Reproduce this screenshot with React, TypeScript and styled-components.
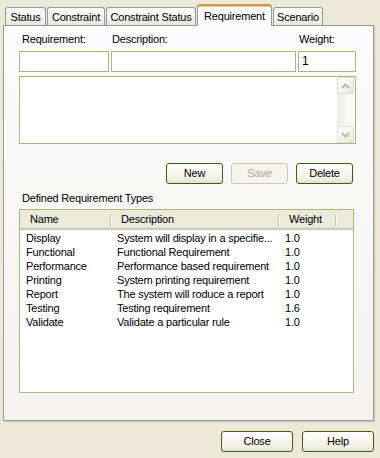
import React from "react";
import styled, { createGlobalStyle } from "styled-components";

const Global = createGlobalStyle`
  html, body { margin: 0; padding: 0; background: #ECE9D8; }
  body { font-family: "Liberation Sans", Arial, sans-serif; font-size: 11px; color: #000; letter-spacing: -0.2px; }
  * { box-sizing: border-box; }
`;

const FONT = `"Liberation Sans", Arial, sans-serif`;

const Window = styled.div`
  width: 380px;
  height: 458px;
  background: #ECE9D8;
  padding-top: 4px;
  display: flex;
  flex-direction: column;
  overflow: hidden;
`;

const TabStrip = styled.div`
  display: flex;
  align-items: flex-end;
  height: 21px;
  padding-left: 5px;
  gap: 1px;
  position: relative;
  z-index: 1;
`;

const Tab = styled.div<{ $w: number; $active?: boolean }>`
  width: ${(p) => p.$w}px;
  height: ${(p) => (p.$active ? 22 : 18)}px;
  margin-bottom: ${(p) => (p.$active ? -1 : 0)}px;
  border: 1px solid #919B9C;
  border-bottom: none;
  border-radius: 3px 3px 0 0;
  background: ${(p) =>
    p.$active ? "#FCFCFE" : "linear-gradient(180deg, #FFFFFF 0%, #F4F3EE 55%, #E9E7DC 100%)"};
  ${(p) =>
    p.$active &&
    `border-top: 2px solid #C99A4E; box-shadow: inset 0 1px 0 #EDC27A;`}
  display: flex;
  align-items: center;
  justify-content: center;
  line-height: 13px;
  white-space: nowrap;
  padding-top: ${(p) => (p.$active ? 0 : 1)}px;
`;

const Panel = styled.div`
  margin-left: 3px;
  width: 371px;
  height: 396px;
  border: 1px solid #919B9C;
  background: linear-gradient(180deg, #FCFCFE 0%, #F4F3EE 100%);
  box-shadow: 1px 1px 0 #D0CDBD, 2px 2px 0 #E3E0D0;
  padding: 7px 17px 0 15px;
  display: flex;
  flex-direction: column;
`;

const FieldRow = styled.div`
  display: grid;
  grid-template-columns: 90px 185px 58px;
  column-gap: 2px;
`;

const Field = styled.div`
  display: flex;
  flex-direction: column;
`;

const Label = styled.div<{ $pad?: number }>`
  height: 13px;
  line-height: 13px;
  padding-left: ${(p) => p.$pad ?? 3}px;
  margin-bottom: 5px;
  white-space: nowrap;
`;

const Input = styled.div`
  height: 21px;
  border: 1px solid #A4B97F;
  background: #FFFFFF;
  padding-left: 3px;
  line-height: 19px;
  font-size: 12px;
`;

const TextArea = styled.div`
  margin-top: 4px;
  height: 68px;
  border: 1px solid #A4B97F;
  background: #FFFFFF;
  display: flex;
  justify-content: flex-end;
  padding-right: 1px;
`;

const ScrollBar = styled.div`
  width: 17px;
  height: 100%;
  background: linear-gradient(90deg, #EEEDE6 0%, #F8F8F4 60%, #FBFBF9 100%);
  display: flex;
  flex-direction: column;
  justify-content: space-between;
`;

const ScrollButton = styled.div`
  width: 17px;
  height: 17px;
  border: 1px solid #DDDFD2;
  border-radius: 2px;
  background: linear-gradient(135deg, #FFFFFF 0%, #F3F2EA 60%, #E6E5DA 100%);
  display: flex;
  align-items: center;
  justify-content: center;
`;

const ButtonRow = styled.div`
  margin-top: 19px;
  display: flex;
  justify-content: flex-end;
  gap: 8px;
  padding-right: 3px;
`;

const Button = styled.button<{ $w?: number }>`
  width: ${(p) => p.$w ?? 57}px;
  height: 21px;
  border: 1px solid #3E5D12;
  border-radius: 3px;
  background: linear-gradient(180deg, #FFFFFF 0%, #FAF9F1 40%, #F1EFE3 80%, #E3E0CE 100%);
  font-family: ${FONT};
  font-size: 11px;
  letter-spacing: -0.2px;
  color: #000;
  padding: 0;
  line-height: 19px;
  &:disabled {
    border-color: #CAC8BB;
    color: #ACA899;
    background: #F5F4EA;
  }
`;

const SectionLabel = styled.div`
  margin-top: 8px;
  height: 13px;
  line-height: 13px;
  padding-left: 3px;
`;

const List = styled.div`
  margin-top: 4px;
  width: 335px;
  height: 184px;
  border: 1px solid #A4B97F;
  background: #FFFFFF;
`;

const COLS = "91px 168px 57px 1fr";

const Header = styled.div`
  display: grid;
  grid-template-columns: ${COLS};
  height: 20px;
  background: #EBEADB;
  box-shadow: inset 0 -1px 0 #CBC7B8, inset 0 -2px 0 #D6D2C2, inset 0 -3px 0 #E2DECD;
`;

const HeadCell = styled.div<{ $sep?: boolean }>`
  position: relative;
  padding: 1px 0 0 10px;
  line-height: 17px;
  white-space: nowrap;
  &::after {
    content: "";
    display: ${(p) => (p.$sep ? "block" : "none")};
    position: absolute;
    right: 0;
    top: 4px;
    width: 1px;
    height: 12px;
    background: #C7C5B2;
    box-shadow: 1px 0 0 #FFFFFF;
  }
`;

const Body = styled.div`
  padding-top: 1px;
`;

const Row = styled.div`
  display: grid;
  grid-template-columns: ${COLS};
  height: 14px;
  line-height: 14px;
`;

const Cell = styled.div`
  padding-left: 6px;
  white-space: nowrap;
  overflow: hidden;
`;

const Footer = styled.div`
  margin-top: 10px;
  display: flex;
  justify-content: flex-end;
  gap: 9px;
  padding-right: 6px;
`;

const Chevron = ({ up }: { up?: boolean }) => (
  <svg width="9" height="6" viewBox="0 0 9 6">
    <path
      d={up ? "M1 5 L4.5 1.5 L8 5" : "M1 1 L4.5 4.5 L8 1"}
      fill="none"
      stroke="#B6BEA8"
      strokeWidth="2"
    />
  </svg>
);

const tabs = [
  { label: "Status", w: 41 },
  { label: "Constraint", w: 58 },
  { label: "Constraint Status", w: 90 },
  { label: "Requirement", w: 75, active: true },
  { label: "Scenario", w: 50 },
];

const rows = [
  ["Display", "System will display in a specifie...", "1.0"],
  ["Functional", "Functional Requirement", "1.0"],
  ["Performance", "Performance based requirement", "1.0"],
  ["Printing", "System printing requirement", "1.0"],
  ["Report", "The system will roduce a report", "1.0"],
  ["Testing", "Testing requirement", "1.6"],
  ["Validate", "Validate a particular rule", "1.0"],
];

export default function App() {
  return (
    <>
      <Global />
      <Window>
        <TabStrip>
          {tabs.map((t) => (
            <Tab key={t.label} $w={t.w} $active={t.active}>
              {t.label}
            </Tab>
          ))}
        </TabStrip>
        <Panel>
          <FieldRow>
            <Field>
              <Label $pad={3}>Requirement:</Label>
              <Input />
            </Field>
            <Field>
              <Label $pad={1}>Description:</Label>
              <Input />
            </Field>
            <Field>
              <Label $pad={1}>Weight:</Label>
              <Input>1</Input>
            </Field>
          </FieldRow>
          <TextArea>
            <ScrollBar>
              <ScrollButton>
                <Chevron up />
              </ScrollButton>
              <ScrollButton>
                <Chevron />
              </ScrollButton>
            </ScrollBar>
          </TextArea>
          <ButtonRow>
            <Button>New</Button>
            <Button disabled>Save</Button>
            <Button>Delete</Button>
          </ButtonRow>
          <SectionLabel>Defined Requirement Types</SectionLabel>
          <List>
            <Header>
              <HeadCell $sep>Name</HeadCell>
              <HeadCell $sep>Description</HeadCell>
              <HeadCell $sep>Weight</HeadCell>
              <HeadCell />
            </Header>
            <Body>
              {rows.map((r) => (
                <Row key={r[0]}>
                  <Cell>{r[0]}</Cell>
                  <Cell>{r[1]}</Cell>
                  <Cell>{r[2]}</Cell>
                  <Cell />
                </Row>
              ))}
            </Body>
          </List>
        </Panel>
        <Footer>
          <Button $w={72}>Close</Button>
          <Button $w={72}>Help</Button>
        </Footer>
      </Window>
    </>
  );
}
